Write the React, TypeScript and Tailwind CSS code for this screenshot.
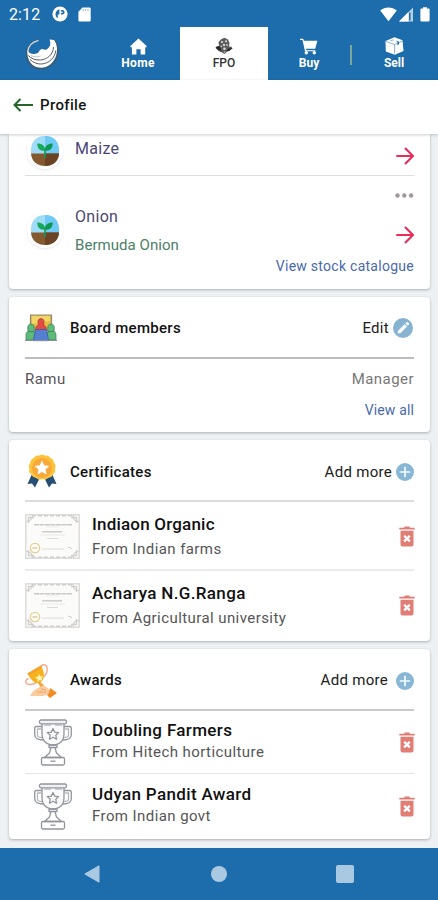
import React from "react";

type RowData = { title: string; sub: string };

function StatusBar() {
  return (
    <div className="flex h-[27px] items-center bg-[#1d6cab] pl-[9px] pr-[8px] text-white">
      <span className="w-[43px] pt-[2px] text-[16px] leading-[20px] tracking-[0.1px]">2:12</span>
      <svg className="mt-[1px] h-4 w-4" viewBox="0 0 16 16">
        <circle cx="8" cy="8" r="7.6" fill="#fff" />
        <path d="M7.400 3.300v5.200H5.800v3.800C2.500 10.500 2.600 5 7.400 3.300z" fill="#1d6cab" />
        <path d="M9 4h1.200a2.300 2.300 0 0 1 0 4.600H9z" fill="#1d6cab" />
        <path d="M9.200 5.500h1.300v1.400H9.200z" fill="#fff" />
      </svg>
      <svg className="ml-[10px] mt-[1px] h-[15px] w-[13px]" viewBox="0 0 13 15">
        <path d="M4.5.5H11.500a1.200 1.200 0 0 1 1.200 1.200v11.600a1.200 1.200 0 0 1-1.200 1.200H1.600a1.200 1.200 0 0 1-1.200-1.200V4.700z" fill="#fff" />
        <path d="M5.200 2.200v1.800M7.600 2.200v1.800M10 2.200v1.800" stroke="#6fa3cd" strokeWidth=".9" />
      </svg>
      <div className="grow" />
      <svg className="mt-px h-[15px] w-[17px]" viewBox="0 0 17 15">
        <path d="M.2 3.600C5-.5 12-.5 16.800 3.600L8.500 14.300z" fill="#fff" />
      </svg>
      <svg className="ml-[2px] mt-px h-[15px] w-[14px]" viewBox="0 0 14 15">
        <path d="M14 .5V14.500H0z" fill="#b5d2e9" />
        <path d="M9.500 5V14.500H0z" fill="#fff" />
        <path d="M10.800 5.500v8" stroke="#1d5f98" strokeWidth="1.400" />
      </svg>
      <svg className="ml-[7px] mt-px h-[15px] w-[10px]" viewBox="0 0 10 15">
        <path d="M3 .2h4v1.400h1.600q1 0 1 1V13.600q0 1-1 1H1.400q-1 0-1-1V2.600q0-1 1-1H3z" fill="#fff" />
      </svg>
    </div>
  );
}

function Logo() {
  return (
    <svg className="ml-[25px] mt-[10px] h-[33px] w-[34px] shrink-0" viewBox="0 0 34 33">
      <path d="M13.500 3C6 4.500 1 10.500 1.500 18 2 26 8.500 32 16.500 31.500 26 31 33 24 32.800 14 32.700 9 31.500 5.500 29.500 3" fill="none" stroke="#4b5560" strokeWidth="1.200" />
      <path d="M13.500 3.300C7 5 3 9 2.800 15" fill="none" stroke="#cfd8de" strokeWidth="1.300" />
      <path d="M24.500 2.600 29 3c3 4 4 10 2 16-3 8.500-10 12.500-17 11.500C7 29.500 2 24 2.300 13.500c1.500 2.300 4 3.700 6.500 3.500 3-.2 4.500-1 5.200-2.500.8-1.500 2-2.700 3.500-2.500 1.300.8 2.800 1.300 4.500.2 3.500-2 4-5.500 2.500-9.600z" fill="#fff" />
      <path d="M28.500 10C28.500 17 22.500 22.500 15.500 23 10.500 23.300 6 21.500 3.200 18.500M30.800 13.500c-.8 7.500-7 13-14.300 13.500-4.500.2-8.500-1.500-11.500-4.500" fill="none" stroke="#565c63" strokeWidth="1" />
      <path d="M15.500 19c-3.500 1.200-7 .8-10-.5" fill="none" stroke="#a9b4bc" strokeWidth=".8" />
    </svg>
  );
}

function NavBar() {
  return (
    <div className="flex h-[53px] bg-[#1d6cab] text-[12px] font-bold leading-[14px] text-white">
      <Logo />
      <div className="ml-[37px] flex w-[84px] flex-col items-center pt-[11px]">
        <svg className="h-[17px] w-[17px]" viewBox="0 0 17 17">
          <path d="M8.500.5 16.600 8v1.300h-1.400V16.500h-4.600v-5.200H6.400v5.200H1.900V9.300H.4V8z" fill="#fff" />
        </svg>
        <span className="mt-[1px] tracking-[0.35px]">Home</span>
      </div>
      <div className="flex w-[88px] flex-col items-center bg-white pt-[10px] text-[#333]">
        <svg className="h-[19px] w-[20px]" viewBox="0 0 20 19">
          <path d="M7.500 2 10.500.8 14 2.500 15.500 6 15 9.500l2.500.3 1 1.700-3.500 2.500-2 .8L10.500 17 8 15.500 4.500 14 1.500 11l1-1.500L5 9 4.500 5z" fill="#5c5c5c" />
          <path d="M1.500 10.500 5 13l2.500 1-1-3.500-2-1.500zM18.500 11l-4 .5-2 2.500 2.500 0z" fill="#262626" />
          <circle cx="8" cy="5" r="1.100" fill="#d8d8d8" />
          <circle cx="12" cy="4.300" r="1.100" fill="#cfcfcf" />
          <circle cx="10" cy="8" r="1.200" fill="#cfcfcf" />
          <circle cx="13" cy="8" r="1" fill="#c0c0c0" />
          <circle cx="7.300" cy="9.300" r=".9" fill="#c0c0c0" />
          <circle cx="10.500" cy="11.800" r="1.300" fill="#d8d8d8" />
          <circle cx="10.500" cy="15" r=".8" fill="#c0c0c0" />
        </svg>
        <span className="font-medium">FPO</span>
      </div>
      <div className="flex w-[82px] flex-col items-center pt-[11px]">
        <svg className="h-[17px] w-[18px]" viewBox="0 0 18 17">
          <path d="M0 .8h3.200l.7 2h13.500l-2.200 8H6l.3 1.500h9v1H5L2.500 2H0z" fill="#fff" />
          <circle cx="6.300" cy="14.800" r="1.700" fill="#fff" />
          <circle cx="14.300" cy="14.800" r="1.700" fill="#fff" />
        </svg>
        <span className="mt-[1px]">Buy</span>
      </div>
      <div className="mt-[18px] h-[20px] w-[2px] bg-[#78a79d]" />
      <div className="flex w-[84px] flex-col items-center pt-[10px]">
        <svg className="h-[18px] w-[19px]" viewBox="0 0 19 18">
          <path d="M9.500.3 17.500 3.300 18.500 14 9.800 17.700.8 14.500.5 4z" fill="#fff" />
          <path d="M1 4.500 9.500 7.500 17.500 4M9.500 7.500v9" fill="none" stroke="#6d9fc8" strokeWidth=".8" />
          <path d="M11 3.500 14 4.800v2.700l-1.500.5V5.500z" fill="#1d6cab" />
          <path d="m5.500 3.800 3-1" stroke="#6d9fc8" strokeWidth=".9" />
        </svg>
        <span className="mt-[1px]">Sell</span>
      </div>
    </div>
  );
}

function Sprout() {
  return (
    <div className="flex h-[36px] w-[36px] shrink-0 items-center justify-center rounded-full bg-white shadow-[0_1px_3px_rgba(0,0,0,0.09)]">
      <svg className="h-[30px] w-[28px]" viewBox="0 0 28 30">
        <path d="M0 18C-1 6 5 0 14 0s15 6 14 18z" fill="#9fdcf8" />
        <path d="M14 0c9 0 15 6 14 18H14z" fill="#6fcbf6" />
        <path d="M0 17.500h28C27.500 26 21 30 14 30S.5 26 0 17.500z" fill="#85592f" />
        <path d="M14 17.500h14C27.500 26 21 30 14 30z" fill="#694323" />
        <path d="M14 22V12" stroke="#159858" strokeWidth="1.600" />
        <path d="M14 14.500C9 15.500 6.300 12.500 6.300 7.500c5 0 7.700 2 7.700 7z" fill="#18a85c" />
        <path d="M14 14.500c5 1 7.700-2 7.700-7-5 0-7.700 2-7.700 7z" fill="#0d9850" />
      </svg>
    </div>
  );
}

function RedArrow() {
  return (
    <svg className="h-[18px] w-[18px] shrink-0" viewBox="0 0 18 18" fill="none" stroke="#e92c58" strokeWidth="2.100">
      <path d="M.3 9h16.200M9 1l8 8-8 8" />
    </svg>
  );
}

function Trash() {
  return (
    <svg className="h-[21px] w-4 shrink-0" viewBox="0 0 16 21">
      <path d="M.3 1.700h4.500L6 .4h4l1.200 1.300h4.500v1.700H.3zM1.500 4.800h13v13.700q0 2-2 2h-9q-2 0-2-2z" fill="#e07e76" />
      <path d="m5.200 9.800 5.600 5.600M10.800 9.800l-5.600 5.600" stroke="#fff" strokeWidth="2.300" />
    </svg>
  );
}

function Plus() {
  return (
    <svg className="mt-[1px] h-[18px] w-[18px]" viewBox="0 0 18 18">
      <circle cx="9" cy="9" r="9" fill="#88b7d5" />
      <path d="M9 3.800v10.400M3.800 9h10.400" stroke="#f4fafc" strokeWidth="1.700" />
    </svg>
  );
}

function Pencil() {
  return (
    <svg className="h-5 w-5" viewBox="0 0 20 20">
      <circle cx="10" cy="10" r="10" fill="#86b3d2" />
      <path d="m4.700 15.500.6-3 6.200-6.300 2.500 2.400-6.300 6.300zM12.300 5.400l1.300-1.200q.7-.5 1.300.1l1 1q.6.700 0 1.300l-1.200 1.200z" fill="#fff" />
    </svg>
  );
}

function BoardIcon() {
  return (
    <svg className="h-7 w-8" viewBox="0 0 32 28">
      <path d="M5.500 1h21v16h-21z" fill="#e7bd42" stroke="#878a7b" strokeWidth="1.200" />
      <path d="M7 2h18v5L7 10z" fill="#f3d565" />
      <g stroke="#3f7965" strokeWidth=".7" fill="#5dba77">
        <path d="M1 26v-5q0-4 4.500-4t5.500 4v5zM21 26v-5q1-4 5.500-4t4.500 4v5z" />
        <path d="M3 17.500q-1.500-7.500 3-7.500t3 7.500zM23 17.500q-1.500-7.500 3-7.500t3 7.500z" />
      </g>
      <path d="M10.500 16.500q0-5 3-5.500-2-6 2.500-6.500 4.500.5 2.500 6.500 3 .5 3 5.500z" fill="#e74a3e" stroke="#963f4a" strokeWidth=".7" />
      <path d="m11.500 15.500h9q1 0 1.200 1l2 10.200H8.300l2-10.200q.2-1 1.200-1z" fill="#5580d0" stroke="#3455a0" strokeWidth=".7" />
      <path d="M0 26.500h32" stroke="#8590a0" strokeWidth="1" />
    </svg>
  );
}

function MedalIcon() {
  return (
    <svg className="h-[34px] w-[30px]" viewBox="0 0 30 34">
      <path d="m4.500 21-4 9 4.500-.5 3 4 4-8zM25.500 21l4 9-4.500-.5-3 4-4-8z" fill="#254f73" />
      <path d="M15 .5 18 1.500l3.200.2 2.300 2.300 2.800 1.700.8 3 1.500 2.800-.5 3.200.1 3.200-2.200 2.400-1.700 2.700-3 .8-2.800 1.700-3.200-.3-3.300.3-2.800-1.700-3-.8L4.500 20.500 2.200 18l.1-3.200-.5-3.200 1.500-2.800.8-3L6.800 4 9 1.700l3.200-.2z" fill="#fcc438" />
      <circle cx="15" cy="14" r="10" fill="#f9a83a" />
      <path d="m15 6.500 2.200 4.800 5.200.6-3.900 3.500 1.100 5.200-4.600-2.600-4.600 2.600 1.100-5.200-3.900-3.500 5.200-.6z" fill="#fff" />
    </svg>
  );
}

function AwardIcon() {
  return (
    <svg className="mt-[2px] h-[35px] w-[33px]" viewBox="0 0 33 35">
      <g fill="none" stroke="#f3a98a" strokeWidth="1.400">
        <path d="M3.500 14.500C-.5 16-.5 20.500 5.500 20.500l6-1.500" />
        <path d="M16 2c4-3 7 0 6 5-.5 3.500-2 5-4 6.500" />
      </g>
      <path d="M2.500 9.500 16 1.500c3.500 6 4.500 13-1 17.500-5 1-9.500-3-12.500-9.500z" fill="#f7b31d" />
      <path d="M2.500 9.500 16 1.500l1 2L3.500 11.500z" fill="#f69e30" />
      <path d="m14 10 1.200 2.500 2.800-.6-1.500 2.500 1 2.300-2.800-.6-2 1.900-.2-2.900-2.600-1.400 2.800-.9z" fill="#fff6b5" />
      <path d="m15 18 4 3-3 3-3-5z" fill="#f4a33a" />
      <path d="M5 32c3-6 8-9 14-10.500l5 3.500 2 4-8 3H8z" fill="#fccb9c" />
      <path d="M12 28h9M16 25l5 1" stroke="#eda777" strokeWidth="1" />
      <path d="m25 24 7 5-7 5-3-3 2-2z" fill="#f38b21" />
    </svg>
  );
}

function CertificateThumb() {
  return (
    <svg className="h-[45px] w-[55px] shrink-0" viewBox="0 0 55 45">
      <rect x=".8" y=".8" width="53.400" height="43.400" fill="#fbfbfa" stroke="#d6d4d1" strokeWidth="1.200" />
      <path d="M7 1.800h41M7 43.200h41" stroke="#d2d0cc" strokeWidth="1.400" strokeDasharray="4 2" />
      <path d="M3.500 9V3.500H9M46 3.500h5.500V9M51.500 36v5.500H46M9 41.500H3.500V36" fill="none" stroke="#d3d1cd" strokeWidth="1.400" />
      <path d="M1 7.500q6 0 6.500-6.500M48 1q0 6.500 6 6.500M54 37.500q-6 0-6 6.500M7.500 44q0-6.500-6.500-6.500" fill="none" stroke="#cfcdc9" strokeWidth="1.200" />
      <path d="M9 10.700h38" stroke="#cac9c7" strokeWidth="1.600" strokeDasharray="5 .5" />
      <path d="M21 12.800h13M15 21h25" stroke="#e8e7e5" strokeWidth=".8" />
      <path d="M17 17.800h20" stroke="#cfcdca" strokeWidth="1.500" />
      <path d="M22 24.500h11M17 35h22" stroke="#dedcd8" strokeWidth="1" />
      <circle cx="10" cy="34" r="4.700" fill="#fffdf2" stroke="#e1cf9a" strokeWidth="1.300" />
      <path d="M7.500 34h5" stroke="#d5cbb0" strokeWidth="1.500" />
      <path d="m43 33 4 1.500" stroke="#ccc" strokeWidth="1" />
    </svg>
  );
}

function TrophyThumb() {
  return (
    <svg className="ml-[9px] h-[47px] w-[38px] shrink-0" viewBox="0 0 38 47" fill="none" stroke="#92959c" strokeWidth="1.300" strokeLinejoin="round">
      <path d="M8 4.500V15c0 7 5 10 9 11h4c4-1 9-4 9-11V4.500" fill="#fbfbfc" />
      <rect x="5.500" y="1" width="27" height="3.800" rx="1.500" fill="#f1f2f4" />
      <path d="M10 6h7M21 6h7" stroke="#b6b9be" />
      <path d="M8 7.500H2.500q-1.800 0-1.800 2v6c0 4 3.500 5.500 8.500 5.500M30 7.500h5.500q1.800 0 1.800 2v6c0 4-3.500 5.500-8.500 5.500" />
      <path d="M8 10H3.500v6q0 2.500 4.500 2.500M30 10h4.500v6q0 2.500-4.500 2.500" stroke="#b6b9be" />
      <path d="m19 9.500 1.700 3.600 4 .5-2.900 2.700.8 4-3.600-2-3.600 2 .8-4-2.900-2.700 4-.5z" />
      <path d="M15 26h8v2.500h-8zM17 28.500l-1.500 5.500-5 4.500h17l-5-4.500-1.500-5.500" />
      <rect x="7.500" y="38.500" width="23" height="7.500" rx="1.500" />
      <path d="M16.500 42.200h5" />
    </svg>
  );
}

function CardHeader({
  icon,
  title,
  action,
  frame,
}: {
  icon: React.ReactNode;
  title: string;
  action: React.ReactNode;
  frame: string;
}) {
  return (
    <div className={"flex items-center " + frame}>
      <div className="flex w-[45px] shrink-0 items-center">{icon}</div>
      <h2 className="grow text-[15px] font-medium leading-[20px] tracking-[0.3px] text-[#111]">{title}</h2>
      <div className="flex items-center text-[15px] leading-[20px] text-[#202020]">{action}</div>
    </div>
  );
}

function Entry({ row, thumb, textClass }: { row: RowData; thumb: React.ReactNode; textClass: string }) {
  return (
    <>
      <div className="flex w-[67px] shrink-0 items-center">{thumb}</div>
      <div className={"flex grow flex-col " + textClass}>
        <span className="text-[17px] font-medium leading-[20px] text-[#111]">{row.title}</span>
        <span className="text-[15px] leading-[20px] tracking-[0.42px] text-[#555]">{row.sub}</span>
      </div>
      <div className="-mr-[1px]">
        <Trash />
      </div>
    </>
  );
}

export default function App() {
  return (
    <div className="flex h-[900px] w-[438px] flex-col overflow-hidden bg-[#edf1f4] font-['Roboto',sans-serif]">
      <StatusBar />
      <NavBar />
      <header className="z-10 flex h-[54px] shrink-0 items-center bg-white pl-[13px] shadow-[0_1px_3px_rgba(0,0,0,0.2)]">
        <svg className="mt-[-5px] h-[14px] w-[20px]" viewBox="0 0 20 14" fill="none" stroke="#28652b" strokeWidth="2">
          <path d="M20 7H1.500M7.500 1l-6 6 6 6" />
        </svg>
        <h1 className="-mt-[4px] ml-[7px] text-[15px] font-medium leading-[20px] tracking-[0.35px] text-[#151515]">Profile</h1>
      </header>

      <main className="flex h-[714px] shrink-0 flex-col gap-2 pl-[9px] pr-[8px]">
        <section className="h-[155px] shrink-0 rounded-b-[4px] bg-white pl-4 pr-4 shadow-[0_1px_3px_rgba(0,0,0,0.28)]">
          <div className="flex h-[42px] border-b border-[#dedede]">
            <div className="-mt-px ml-[2px] w-[48px]">
              <Sprout />
            </div>
            <span className="grow pt-[5px] text-[16px] leading-[20px] tracking-[0.3px] text-[#4b4774]">Maize</span>
            <div className="pt-[13px]">
              <RedArrow />
            </div>
          </div>
          <div className="flex h-[80px]">
            <div className="ml-[2px] w-[48px] pt-[36px]">
              <Sprout />
            </div>
            <div className="flex grow flex-col pt-[31px]">
              <span className="text-[16px] leading-[20px] tracking-[0.3px] text-[#4b4774]">Onion</span>
              <span className="mt-[8px] text-[15px] leading-[20px] tracking-[0.05px] text-[#4b8067]">Bermuda Onion</span>
            </div>
            <div className="flex flex-col items-end pt-[17px]">
              <svg className="h-[5px] w-[19px]" viewBox="0 0 19 5" fill="#a3979a">
                <circle cx="2.500" cy="2.500" r="2.200" />
                <circle cx="9.300" cy="2.500" r="2.200" />
                <circle cx="16.100" cy="2.500" r="2.200" />
              </svg>
              <div className="mt-[28px]">
                <RedArrow />
              </div>
            </div>
          </div>
          <div className="text-right text-[14px] leading-[20px] tracking-[0.27px] text-[#4969ad]">View stock catalogue</div>
        </section>

        <section className="h-[135px] shrink-0 rounded-[4px] bg-white px-4 shadow-[0_1px_3px_rgba(0,0,0,0.28)]">
          <CardHeader
            frame="h-[62px] border-b-2 border-[#bdbdbd] pt-[2px]"
            icon={<BoardIcon />}
            title="Board members"
            action={
              <>
                <span className="mr-[4px] tracking-[0.3px]">Edit</span>
                <div className="-mt-px mr-[1px]">
                  <Pencil />
                </div>
              </>
            }
          />
          <div className="flex justify-between pt-[10px] text-[15px] leading-[20px] tracking-[0.45px] text-[#555]">
            <span>Ramu</span>
            <span className="text-[#777]">Manager</span>
          </div>
          <div className="mt-[11px] text-right text-[14px] leading-[20px] tracking-[0.15px] text-[#4969ad]">View all</div>
        </section>

        <section className="h-[201px] shrink-0 rounded-[4px] bg-white px-4 shadow-[0_1px_3px_rgba(0,0,0,0.28)]">
          <CardHeader
            frame="h-[62px] border-b-2 border-[#dadcdd] pt-[3px]"
            icon={<div className="-mt-px ml-[2px]"><MedalIcon /></div>}
            title="Certificates"
            action={
              <>
                <span className="mr-[4px] tracking-[0.3px]">Add more</span>
                <Plus />
              </>
            }
          />
          <div className="flex h-[69px] items-center border-b-2 border-[#e9ebec] pt-[2px]">
            <Entry row={{ title: "Indiaon Organic", sub: "From Indian farms" }} thumb={<CertificateThumb />} textClass="gap-[5px] tracking-[0.2px]" />
          </div>
          <div className="flex h-[68px] items-center">
            <Entry row={{ title: "Acharya N.G.Ranga", sub: "From Agricultural university" }} thumb={<CertificateThumb />} textClass="gap-[5px] tracking-[0.35px]" />
          </div>
        </section>

        <section className="h-[190px] shrink-0 rounded-[4px] bg-white px-4 shadow-[0_1px_3px_rgba(0,0,0,0.28)]">
          <CardHeader
            frame="h-[62px] border-b-2 border-[#cacaca] pt-[2px]"
            icon={<AwardIcon />}
            title="Awards"
            action={
              <>
                <span className="mr-[8px] tracking-[0.3px]">Add more</span>
                <Plus />
              </>
            }
          />
          <div className="flex h-[63px] items-center border-b border-[#e5e5e5]">
            <Entry row={{ title: "Doubling Farmers", sub: "From Hitech horticulture" }} thumb={<TrophyThumb />} textClass="gap-[2px] pb-[2px] tracking-[0.35px]" />
          </div>
          <div className="flex h-[64px] items-center">
            <Entry row={{ title: "Udyan Pandit Award", sub: "From Indian govt" }} thumb={<TrophyThumb />} textClass="gap-[2px] pb-[2px] tracking-[0.35px]" />
          </div>
        </section>
      </main>

      <nav className="flex h-[52px] shrink-0 items-center bg-[#1d6cab] pl-[84px]">
        <svg className="h-[18px] w-4" viewBox="0 0 16 18">
          <path d="M15 .8v16.400L.8 9z" fill="#a9c9e2" stroke="#a9c9e2" strokeWidth="1" strokeLinejoin="round" />
        </svg>
        <div className="ml-[111px] h-4 w-4 rounded-full bg-[#a9c9e2]" />
        <div className="ml-[109px] h-[18px] w-[18px] rounded-[2px] bg-[#a9c9e2]" />
      </nav>
    </div>
  );
}
